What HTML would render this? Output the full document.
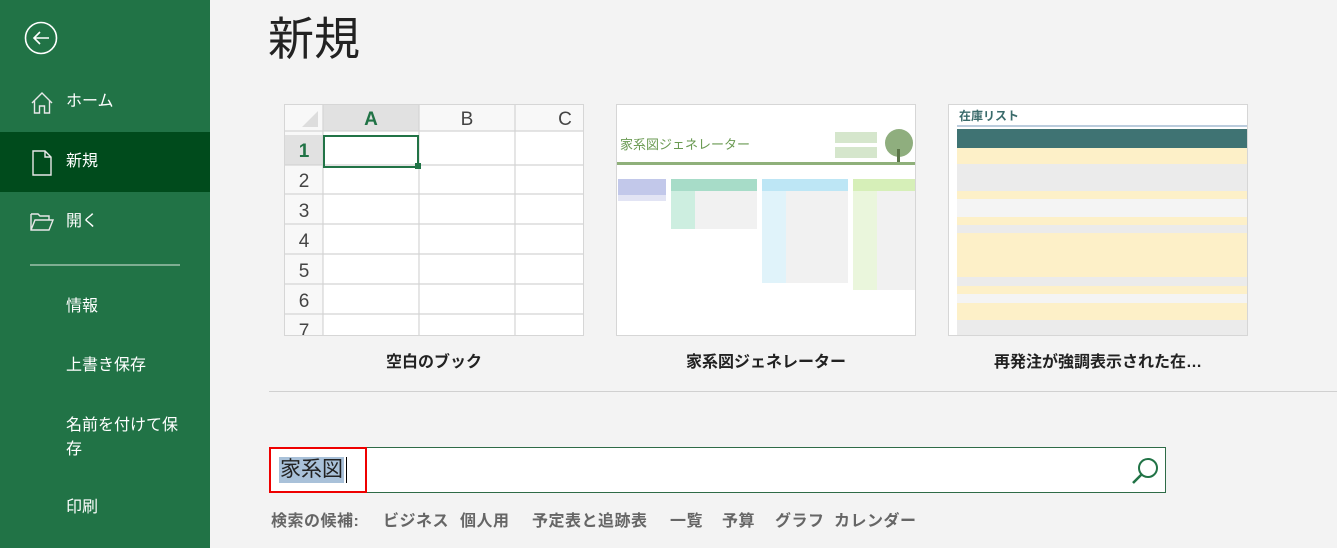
<!DOCTYPE html>
<html><head><meta charset="utf-8"><style>
*{margin:0;padding:0;box-sizing:border-box}
body{width:1337px;height:548px;background:#f3f3f3;font-family:"Liberation Sans","Noto Sans CJK JP",sans-serif;position:relative;overflow:hidden}
.side{position:absolute;left:0;top:0;width:210px;height:548px;background:#217346;color:#fff}
.it{position:absolute;left:66px;font-size:16px;line-height:20px}
.sel{position:absolute;left:0;top:132px;width:210px;height:60px;background:#004b1c}
.abs{position:absolute}
.thumb{position:absolute;top:104px;width:300px;height:232px;background:#fff;border:1px solid #d6d6d6;overflow:hidden}
.lbl{position:absolute;top:348px;width:300px;text-align:center;font-size:16px;font-weight:bold;color:#222}
.sug{position:absolute;top:507px;font-size:16px;font-weight:bold;color:#666;letter-spacing:0.5px}
</style></head><body>
<div class="side">
<div class="sel"></div>
<svg class="abs" style="left:24px;top:21px" width="34" height="34" viewBox="0 0 34 34"><circle cx="17" cy="17" r="15.5" fill="none" stroke="#fff" stroke-width="1.6"/><path d="M25 17H10M16 11l-6 6 6 6" fill="none" stroke="#fff" stroke-width="1.6"/></svg>
<svg class="abs" style="left:30px;top:91px" width="24" height="24" viewBox="0 0 24 24"><path d="M2 12L12 2l10 10M4.5 10v12h5v-7h5v7h5V10" fill="none" stroke="#e8e8e8" stroke-width="1.4"/></svg>
<div class="it" style="top:92px">ホーム</div>
<svg class="abs" style="left:32px;top:150px" width="20" height="26" viewBox="0 0 20 26"><path d="M1 1h12l6 6v18H1z M13 1v6h6" fill="none" stroke="#e8e8e8" stroke-width="1.4"/></svg>
<div class="it" style="top:152px">新規</div>
<svg class="abs" style="left:30px;top:212px" width="24" height="20" viewBox="0 0 24 20"><path d="M1 2h7l2 2h9v4M1 2v16h18l4-10H5L1 18" fill="none" stroke="#e8e8e8" stroke-width="1.4"/></svg>
<div class="it" style="top:212px">開く</div>
<div class="abs" style="left:30px;top:264px;width:150px;height:2px;background:#7fae92"></div>
<div class="it" style="top:297px">情報</div>
<div class="it" style="top:356px">上書き保存</div>
<div class="it" style="top:414px;width:118px;line-height:24px">名前を付けて保存</div>
<div class="it" style="top:498px">印刷</div>
</div>

<div class="abs" style="left:268px;top:12px;font-size:46px;color:#222;line-height:54px">新規</div>

<div class="thumb" style="left:284px">
<svg width="300" height="232" style="display:block">
<rect x="0" y="0" width="300" height="232" fill="#fff"/>
<rect x="0" y="0" width="38" height="232" fill="#f8f8f8"/>
<rect x="0" y="0" width="300" height="26" fill="#f8f8f8"/>
<rect x="38" y="0" width="96" height="26" fill="#e1e1e1"/>
<rect x="0" y="30" width="38" height="30" fill="#e1e1e1"/>
<path d="M33 6v16H17z" fill="#ddd"/>
<g stroke="#d4d4d4" stroke-width="1.2">
<line x1="38" y1="0" x2="38" y2="232"/><line x1="134" y1="0" x2="134" y2="232"/><line x1="230" y1="0" x2="230" y2="232"/>
<line x1="0" y1="26" x2="300" y2="26"/><line x1="0" y1="60" x2="300" y2="60"/><line x1="0" y1="89" x2="300" y2="89"/><line x1="0" y1="119" x2="300" y2="119"/><line x1="0" y1="149" x2="300" y2="149"/><line x1="0" y1="179" x2="300" y2="179"/><line x1="0" y1="209" x2="300" y2="209"/>
</g>
<rect x="39" y="31" width="94" height="31" fill="none" stroke="#217346" stroke-width="2"/>
<rect x="130" y="58" width="6" height="6" fill="#217346"/>
<g font-family="Liberation Sans" font-size="19" fill="#444" text-anchor="middle">
<text x="86" y="20" fill="#217346" font-weight="bold">A</text><text x="182" y="20">B</text><text x="280" y="20">C</text>
<text x="19" y="52" fill="#217346" font-weight="bold">1</text><text x="19" y="82">2</text><text x="19" y="112">3</text><text x="19" y="142">4</text><text x="19" y="172">5</text><text x="19" y="202">6</text><text x="19" y="232">7</text>
</g></svg></div>
<div class="lbl" style="left:284px">空白のブック</div>

<div class="thumb" style="left:616px">
<svg width="300" height="232" style="display:block">
<text x="3" y="44" font-size="13" fill="#6a9a52" font-family="Noto Sans CJK JP">家系図ジェネレーター</text>
<rect x="218" y="27" width="42" height="11" fill="#d5e6cc"/><rect x="218" y="42" width="42" height="11" fill="#d5e6cc"/>
<circle cx="282" cy="38" r="14" fill="#8fae7e"/><rect x="280" y="44" width="3" height="13" fill="#5a7448"/>
<rect x="0" y="57" width="300" height="3" fill="#8fb07a"/>
<rect x="1" y="74" width="48" height="16" fill="#c2c8ea"/><rect x="1" y="90" width="48" height="6" fill="#e2e4f4"/>
<rect x="54" y="74" width="86" height="12" fill="#a7dcc8"/><rect x="54" y="86" width="24" height="38" fill="#cdeee0"/><rect x="78" y="86" width="62" height="38" fill="#f1f1f1"/>
<rect x="145" y="74" width="86" height="12" fill="#bde6f5"/><rect x="145" y="86" width="24" height="92" fill="#e0f3fa"/><rect x="169" y="86" width="62" height="92" fill="#f1f1f1"/>
<rect x="236" y="74" width="62" height="12" fill="#d6efb8"/><rect x="236" y="86" width="24" height="99" fill="#eaf6dc"/><rect x="260" y="86" width="38" height="99" fill="#f1f1f1"/>
</svg></div>
<div class="lbl" style="left:616px">家系図ジェネレーター</div>

<div class="thumb" style="left:948px">
<svg width="300" height="232" style="display:block">
<text x="10" y="15" font-size="12" font-weight="bold" fill="#3a6b6b" font-family="Noto Sans CJK JP">在庫リスト</text>
<rect x="8" y="20" width="292" height="2" fill="#bcd"/>
<rect x="8" y="24" width="292" height="19" fill="#3f7373"/>
<g>
<rect x="8" y="43" width="292" height="16" fill="#fdf0c8"/>
<rect x="8" y="59" width="292" height="27" fill="#ebebeb"/>
<rect x="8" y="86" width="292" height="8" fill="#fdf0c8"/>
<rect x="8" y="94" width="292" height="18" fill="#f4f4f4"/>
<rect x="8" y="112" width="292" height="8" fill="#fdf0c8"/>
<rect x="8" y="120" width="292" height="8" fill="#ebebeb"/>
<rect x="8" y="128" width="292" height="44" fill="#fdf0c8"/>
<rect x="8" y="172" width="292" height="9" fill="#ebebeb"/>
<rect x="8" y="181" width="292" height="8" fill="#fdf0c8"/>
<rect x="8" y="189" width="292" height="9" fill="#f4f4f4"/>
<rect x="8" y="198" width="292" height="17" fill="#fdf0c8"/>
<rect x="8" y="215" width="292" height="17" fill="#ebebeb"/>
</g></svg></div>
<div class="lbl" style="left:948px">再発注が強調表示された在…</div>

<div class="abs" style="left:269px;top:391px;width:1068px;height:1px;background:#d0d0d0"></div>

<div class="abs" style="left:269px;top:447px;width:897px;height:46px;background:#fff;border:1px solid #2e6b47"></div>
<div class="abs" style="left:269px;top:447px;width:98px;height:46px;border:2px solid #e00"></div>
<div class="abs" style="left:279px;top:457px;height:26px;padding:0 1px;background:#a9c1d9;font-size:21px;line-height:26px;color:#222">家系図</div>
<div class="abs" style="left:346px;top:457px;width:1px;height:26px;background:#000"></div>
<svg class="abs" style="left:1130px;top:456px" width="30" height="30" viewBox="0 0 30 30"><circle cx="18" cy="12" r="9" fill="none" stroke="#217346" stroke-width="2"/><path d="M11.5 18.5L3 27" stroke="#217346" stroke-width="2.6"/></svg>

<div class="sug" style="left:271px">検索の候補:</div>
<div class="sug" style="left:383px">ビジネス</div>
<div class="sug" style="left:460px">個人用</div>
<div class="sug" style="left:532px">予定表と追跡表</div>
<div class="sug" style="left:670px">一覧</div>
<div class="sug" style="left:722px">予算</div>
<div class="sug" style="left:775px">グラフ</div>
<div class="sug" style="left:834px">カレンダー</div>
</body></html>
